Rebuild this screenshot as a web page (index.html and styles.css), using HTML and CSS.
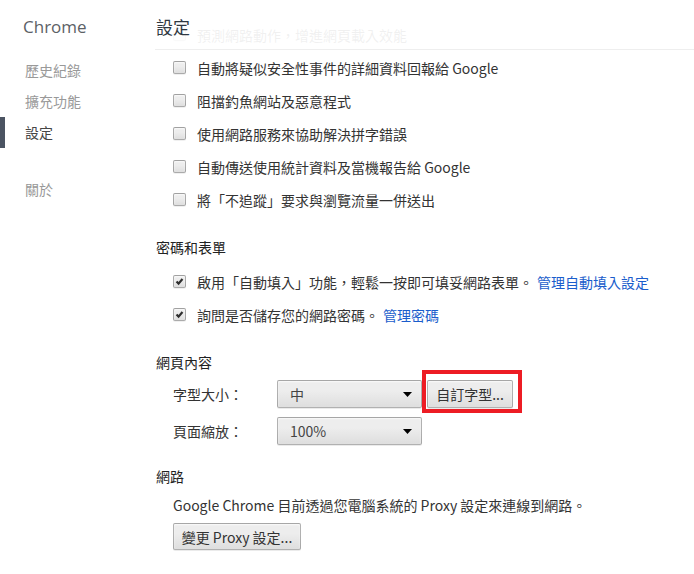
FILE: index.html
```html
<!DOCTYPE html>
<html lang="zh-Hant">
<head>
<meta charset="utf-8">
<title>設定</title>
<link rel="stylesheet" href="styles.css">
</head>
<body>
<div class="page">
  <nav class="sidebar">
    <div class="brand">Chrome</div>
    <ul class="menu">
      <li>歷史紀錄</li>
      <li>擴充功能</li>
      <li class="active">設定</li>
      <li class="about">關於</li>
    </ul>
  </nav>

  <main class="main">
    <!-- header sits over the scrolled list -->
    <header class="main-header"><h1>設定</h1></header>

    <div class="content">
      <div class="list">
        <div class="check"><span class="box"></span>預測網路動作，增進網頁載入效能</div>
        <div class="check"><span class="box"></span>自動將疑似安全性事件的詳細資料回報給 Google</div>
        <div class="check"><span class="box"></span>阻擋釣魚網站及惡意程式</div>
        <div class="check"><span class="box"></span>使用網路服務來協助解決拼字錯誤</div>
        <div class="check"><span class="box"></span>自動傳送使用統計資料及當機報告給 Google</div>
        <div class="check"><span class="box"></span>將「不追蹤」要求與瀏覽流量一併送出</div>
      </div>

      <section class="group">
        <h3>密碼和表單</h3>
        <div class="group-body">
          <div class="check"><span class="box checked"><svg viewBox="0 0 13 13"><path d="M3 6.6 L5.4 9 L10 3.6" /></svg></span>啟用「自動填入」功能，輕鬆一按即可填妥網路表單。 <a href="#">管理自動填入設定</a></div>
          <div class="check"><span class="box checked"><svg viewBox="0 0 13 13"><path d="M3 6.6 L5.4 9 L10 3.6" /></svg></span>詢問是否儲存您的網路密碼。 <a href="#">管理密碼</a></div>
        </div>
      </section>

      <section class="group">
        <h3>網頁內容</h3>
        <div class="group-body">
          <div class="field">
            <span class="field-label">字型大小：</span>
            <div class="select"><span>中</span><svg class="arrow" viewBox="0 0 9 5"><path d="M0 0 H9 L4.5 5 Z" /></svg></div>
            <span class="marked"><button class="btn font-btn">自訂字型...</button></span>
          </div>
          <div class="field">
            <span class="field-label">頁面縮放：</span>
            <div class="select"><span>100%</span><svg class="arrow" viewBox="0 0 9 5"><path d="M0 0 H9 L4.5 5 Z" /></svg></div>
          </div>
        </div>
      </section>

      <section class="group">
        <h3>網路</h3>
        <div class="group-body">
          <p class="note">Google Chrome 目前透過您電腦系統的 Proxy 設定來連線到網路。</p>
          <button class="btn proxy-btn">變更 Proxy 設定...</button>
        </div>
      </section>
    </div>
  </main>
</div>
</body>
</html>
```

FILE: styles.css
```css
body {
	margin: 0;
	background: #fff;
	color: #333;
	font-family: "Noto Sans CJK TC", "Noto Sans", sans-serif;
	font-size: 14px;
	text-spacing-trim: space-all;
}

.page {
	display: flex;
	height: 574px;
	overflow: hidden;
}

/* left navigation */
.sidebar {
	width: 156px;
	flex: none;
	padding-top: 14px;
}

.brand {
	padding-left: 23px;
	font-family: "Open Sans", "Noto Sans", sans-serif;
	font-size: 17px;
	line-height: 26px;
	color: #5c6166;
}

.menu {
	list-style: none;
	margin: 15px 0 0 0;
	padding: 0;
}

.menu li {
	border-left: 5px solid transparent;
	padding-left: 20px;
	line-height: 31px;
	color: #999;
}

.menu li.active {
	border-left-color: #4b5462;
	color: #464646;
}

.menu li.about {
	margin-top: 26px;
}

/* main column */
.main {
	flex: 1;
	position: relative;
}

.main-header {
	position: absolute;
	top: 0;
	left: -1px;
	right: 0;
	height: 49px;
	border-bottom: 1px solid #eee;
	background: rgba(255, 255, 255, 0.93);
}

.main-header h1 {
	margin: 0;
	padding-left: 1px;
	font-size: 17px;
	font-weight: normal;
	line-height: 26px;
	padding-top: 14px;
	color: #303942;
}

.content {
	padding-top: 18px;
}

.list {
	padding-left: 17px;
}

.check {
	display: flex;
	align-items: center;
	height: 33px;
	white-space: nowrap;
}

.check a {
	color: #1a5dcc;
	text-decoration: none;
	margin-left: 4px;
}

.box {
	width: 11px;
	height: 11px;
	margin-right: 11px;
	border: 1px solid rgba(0, 0, 0, 0.28);
	border-radius: 2px;
	background-image: linear-gradient(#ededed, #ededed 38%, #dedede);
	box-shadow: 0 1px 0 rgba(0, 0, 0, 0.06), inset 0 1px 2px rgba(255, 255, 255, 0.75);
	flex: none;
	display: flex;
}

.box svg {
	width: 11px;
	height: 11px;
}

.box path {
	fill: none;
	stroke: #2e2e2e;
	stroke-width: 2.6;
}

/* sections */
.group {
	margin-top: 21px;
}

.group h3 {
	margin: 0 0 8px 0;
	font-size: 14px;
	font-weight: normal;
	line-height: 20px;
	color: #222;
}

.group-body {
	padding-left: 17px;
}

.field {
	display: flex;
	align-items: center;
	height: 28px;
	margin-bottom: 9px;
}

.field-label {
	width: 104px;
	color: #333;
}

.select {
	box-sizing: border-box;
	width: 145px;
	height: 28px;
	display: flex;
	align-items: center;
	justify-content: space-between;
	padding: 0 9px 0 12px;
	border: 1px solid rgba(0, 0, 0, 0.25);
	border-radius: 2px;
	background-image: linear-gradient(#ededed, #ededed 38%, #dedede);
	box-shadow: 0 1px 0 rgba(0, 0, 0, 0.08), inset 0 1px 2px rgba(255, 255, 255, 0.75);
	color: #444;
}

.arrow {
	width: 9px;
	height: 5px;
}

.btn {
	box-sizing: border-box;
	font-family: inherit;
	font-size: 14px;
	color: #333;
	border: 1px solid rgba(0, 0, 0, 0.25);
	border-radius: 2px;
	background-image: linear-gradient(#ededed, #ededed 38%, #dedede);
	box-shadow: 0 1px 0 rgba(0, 0, 0, 0.08), inset 0 1px 2px rgba(255, 255, 255, 0.75);
	padding: 0;
	margin: 0;
}

.marked {
	position: relative;
	margin-left: 5px;
	display: flex;
}

/* red highlight drawn around the button */
.marked::after {
	content: "";
	position: absolute;
	left: -5px;
	right: -9px;
	top: -10px;
	bottom: -5px;
	border: 4px solid #ed1c24;
}

.font-btn {
	width: 86px;
	height: 28px;
}

.note {
	margin: 0;
	line-height: 20px;
	padding-top: 1px;
}

.proxy-btn {
	margin-top: 8px;
	width: 128px;
	height: 27px;
}
```
